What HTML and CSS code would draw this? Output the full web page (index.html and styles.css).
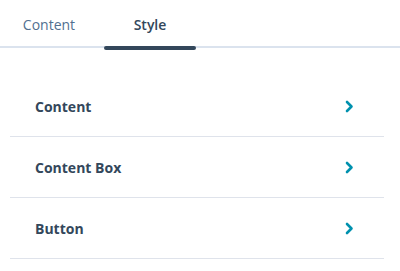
FILE: index.html
```html
<!doctype html>
<html lang="en">
<head>
    <meta charset="UTF-8">
    <title>Style panel</title>
    <link rel="stylesheet" href="styles.css">
</head>
<body>
<div class="panel">
    <div class="tabs">
        <div class="tabs__tab">Content</div>
        <div class="tabs__tab tabs__tab--active">Style</div>
    </div>
    <div class="groups">
        <div class="groups__row">
            <span>Content</span>
            <svg class="groups__chevron" width="9" height="13" viewBox="0 0 9 13"><polyline points="2,2 6.5,6.5 2,11"/></svg>
        </div>
        <div class="groups__row">
            <span>Content Box</span>
            <svg class="groups__chevron" width="9" height="13" viewBox="0 0 9 13"><polyline points="2,2 6.5,6.5 2,11"/></svg>
        </div>
        <div class="groups__row">
            <span>Button</span>
            <svg class="groups__chevron" width="9" height="13" viewBox="0 0 9 13"><polyline points="2,2 6.5,6.5 2,11"/></svg>
        </div>
    </div>
</div>
</body>
</html>
```

FILE: styles.css
```css
body,html{font-family:'Open Sans',sans-serif;font-size:14px;padding:0;margin:0;background:#fff;color:#33475b}
.panel{width:400px}
.tabs{display:flex;height:46px;border-bottom:2px solid #dbe3ee}
.tabs__tab{position:relative;display:flex;align-items:center;justify-content:center;width:98px;height:48px;color:#516f90;font-size:14px}
.tabs__tab--active{width:92px;margin-left:6px;color:#33475b;font-weight:600}
.tabs__tab--active:after{content:'';position:absolute;left:0;right:0;bottom:-2px;height:4px;border-radius:2px;background:#33475b}
.groups{margin:28px 16px 0 10px}
.groups__row{display:flex;align-items:center;justify-content:space-between;height:60px;padding:0 30px 0 25px;border-bottom:1px solid #dfe3eb;font-weight:700}
.groups__chevron{fill:none;stroke:#0091ae;stroke-width:2.6;stroke-linecap:round;stroke-linejoin:round}
```
